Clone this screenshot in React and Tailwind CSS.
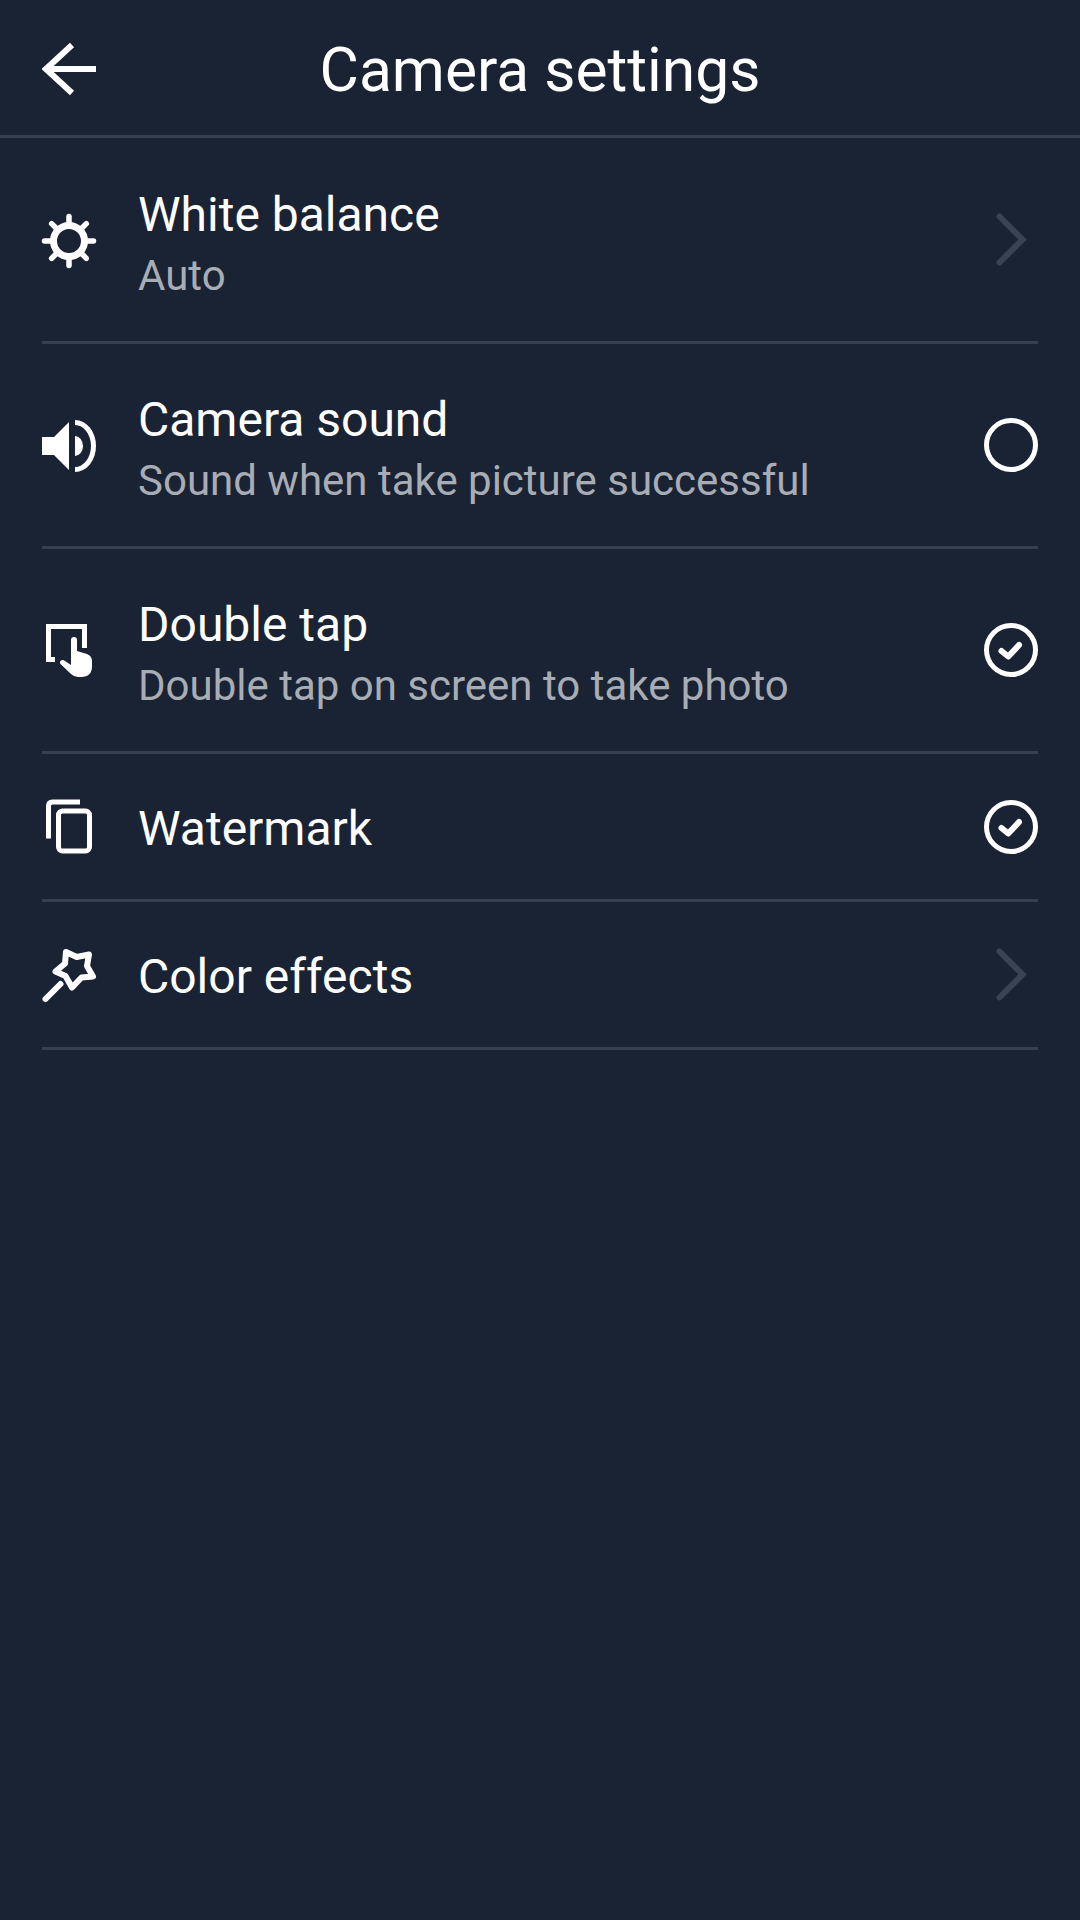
import React from 'react';

const rows = [
  { icon: 'gear', title: 'White balance', sub: 'Auto', right: 'chevron' },
  { icon: 'sound', title: 'Camera sound', sub: 'Sound when take picture successful', right: 'off' },
  { icon: 'tap', title: 'Double tap', sub: 'Double tap on screen to take photo', right: 'on' },
  { icon: 'copy', title: 'Watermark', right: 'on' },
  { icon: 'wand', title: 'Color effects', right: 'chevron' },
];

const teeth = [0, 45, 90, 135, 180, 225, 270, 315];

function LeftIcon({ name }) {
  return (
    <svg viewBox="0 0 60 60" className="w-[60px] h-[60px] shrink-0 -ml-[2px] mr-[38px]" fill="none" stroke="#fff">
      {name === 'gear' && (
        <g transform="translate(29 31)">
          <circle r="15.5" strokeWidth="7" />
          {teeth.map(a => (
            <line key={a} x1="17" x2="24.5" y1="0" y2="0" strokeWidth="5.5" strokeLinecap="round" transform={`rotate(${a})`} />
          ))}
        </g>
      )}
      {name === 'sound' && (
        <g fill="#fff" stroke="none" transform="translate(0 1)">
          <path d="M2 21H14L29 6V54L14 39H2Z" />
          <path d="M35 20A8 10 0 0 1 35 40Z" />
          <path d="M35 4A21 26 0 0 1 35 56V51A16 21 0 0 0 35 9Z" />
        </g>
      )}
      {name === 'tap' && (
        <g>
          <path d="M15 39.5H8.5V6.5H44.5V28" strokeWidth="5" />
          <path fill="#fff" stroke="none" d="M31 20A3 3 0 0 1 37 20V31L47 34Q52 36 52 41V46Q52 57 41 57H38Q34 57 31 54L20.5 44Q19 42 21 40.5Q23 39.5 25 41L31 45Z" />
        </g>
      )}
      {name === 'copy' && (
        <g strokeWidth="5" transform="translate(0 -1)">
          <path d="M8.5 42.5V10Q8.5 6 12.5 6H40" />
          <rect x="18.5" y="15" width="31" height="40" rx="4" />
        </g>
      )}
      {name === 'wand' && (
        <g strokeLinejoin="round" strokeLinecap="round" transform="translate(0 -0.5)">
          <path d="M26 7.5L36.7 12.5L49 10L47 21.5L53 32L41.5 33L32 43L25.5 31.5L15.5 27L25 19Z" strokeWidth="6" />
          <path d="M5.5 54.5L20.5 39.5" strokeWidth="6" />
        </g>
      )}
    </svg>
  );
}

function RightIcon({ name }) {
  if (name === 'chevron') {
    return (
      <svg viewBox="0 0 54 60" className="w-[54px] h-[60px] shrink-0" fill="none" stroke="#3a4352" strokeWidth="6" strokeLinecap="round">
        <path d="M15.5 6.5L38.5 29.5L15.5 52.5" />
      </svg>
    );
  }
  return (
    <svg viewBox="-27 -27 54 54" className="w-[54px] h-[54px] shrink-0" fill="none" stroke="#fff">
      <circle r="24.5" strokeWidth="5" />
      {name === 'on' && <path d="M-9.5 1L-2.7 6.5L8 -5" strokeWidth="6" strokeLinecap="round" strokeLinejoin="round" />}
    </svg>
  );
}

export default function App() {
  return (
    <div className="w-[1080px] h-[1920px] bg-[#1a2333] text-white font-['Roboto',sans-serif]">
      <header className="h-[138px] border-b-[3px] border-[#363f4e] relative flex items-center justify-center">
        <svg viewBox="0 0 54 54" className="absolute left-[42px] top-[42px] w-[54px] h-[54px]" fill="none" stroke="#fff" strokeWidth="6">
          <path d="M54 27H4" />
          <path d="M30 3L4 27L30 51" />
        </svg>
        <h1 className="text-[60.5px] leading-[64px] pt-[7px] font-normal">Camera settings</h1>
      </header>
      <div className="mx-[42px] pt-[1px]">
        {rows.map(r => (
          <div key={r.title} className={`flex items-center border-b-[3px] border-[#363f4e] ${r.sub ? 'h-[205px]' : 'h-[148px]'}`}>
            <LeftIcon name={r.icon} />
            <div className={`flex-1 ${r.sub ? 'pt-[12px]' : 'pt-[5px]'}`}>
              <div className="text-[48px] leading-[60px]">{r.title}</div>
              {r.sub && <div className="text-[42px] leading-[62px] text-[#a8adb5]">{r.sub}</div>}
            </div>
            <RightIcon name={r.right} />
          </div>
        ))}
      </div>
    </div>
  );
}
